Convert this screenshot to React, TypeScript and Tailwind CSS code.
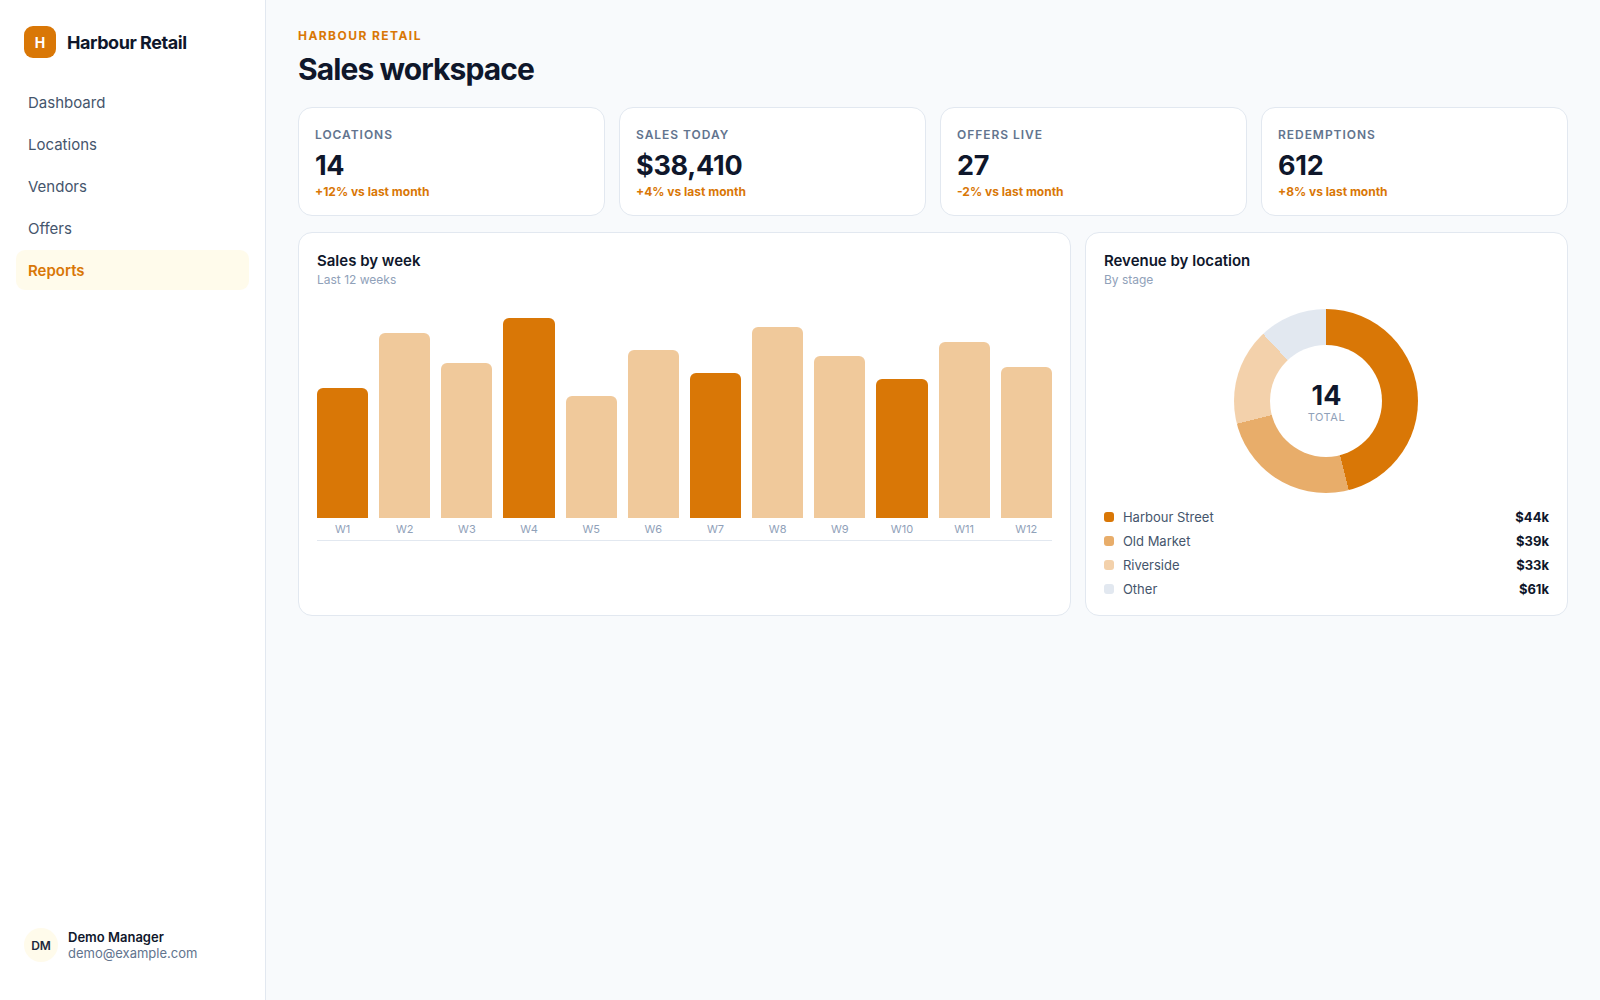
const navItems = ['Dashboard', 'Locations', 'Vendors', 'Offers', 'Reports'];

const stats = [
  { label: 'Locations', value: '14', delta: '+12% vs last month' },
  { label: 'Sales today', value: '$38,410', delta: '+4% vs last month' },
  { label: 'Offers live', value: '27', delta: '-2% vs last month' },
  { label: 'Redemptions', value: '612', delta: '+8% vs last month' },
];

// bar heights in pixels, every third week is highlighted
const weeks = [130, 185, 155, 200, 122, 168, 145, 191, 162, 139, 176, 151];

const locations = [
  { name: 'Harbour Street', value: '$44k', share: 46, color: '#d97706' },
  { name: 'Old Market', value: '$39k', share: 25, color: '#e8ad6a' },
  { name: 'Riverside', value: '$33k', share: 17, color: '#f3d1ab' },
  { name: 'Other', value: '$61k', share: 12, color: '#e2e8f0' },
];

function Sidebar({ active }: { active: string }) {
  return (
    <aside className="w-[266px] shrink-0 flex flex-col bg-white border-r border-slate-200 px-4 pt-[26px] pb-[38px]">
      <div className="flex items-center gap-[11px] px-2 mb-6">
        <div className="w-8 h-8 pt-0.5 rounded-[9px] bg-[#d97706] text-white text-sm font-bold flex items-center justify-center">
          H
        </div>
        <span className="pt-0.5 text-lg font-bold tracking-tight text-slate-900">Harbour Retail</span>
      </div>

      <nav className="flex flex-col gap-0.5">
        {navItems.map((item) => (
          <a
            key={item}
            href="#"
            className={
              item === active
                ? 'h-10 px-3 pt-0.5 flex items-center rounded-[9px] text-[15px] font-semibold bg-amber-50 text-[#d97706]'
                : 'h-10 px-3 pt-0.5 flex items-center rounded-[9px] text-[15px] text-slate-600'
            }
          >
            {item}
          </a>
        ))}
      </nav>

      <div className="mt-auto flex items-center gap-[10px] px-2">
        <div className="w-[34px] h-[34px] pt-0.5 rounded-full bg-amber-50 text-xs font-semibold text-slate-800 flex items-center justify-center">
          DM
        </div>
        <div className="text-[13px] leading-4">
          <div className="font-semibold text-slate-900">Demo Manager</div>
          <div className="text-slate-500">demo@example.com</div>
        </div>
      </div>
    </aside>
  );
}

function StatCard({ label, value, delta }: { label: string; value: string; delta: string }) {
  return (
    <div className="bg-white border border-slate-200 rounded-[14px] px-4 pt-[19px] pb-[15px]">
      <div className="text-xs leading-4 font-semibold uppercase tracking-[0.08em] text-slate-500">{label}</div>
      <div className="mt-[5px] text-[27px] leading-9 font-bold tracking-[-0.01em] text-slate-900">{value}</div>
      <div className="text-xs leading-4 font-bold text-[#d97706]">{delta}</div>
    </div>
  );
}

function PanelHeader({ title, subtitle }: { title: string; subtitle: string }) {
  return (
    <div>
      <h2 className="text-[15px] leading-5 font-semibold text-slate-900">{title}</h2>
      <p className="mt-px text-xs leading-4 text-slate-400">{subtitle}</p>
    </div>
  );
}

function BarChart() {
  return (
    <div className="mt-[30px] flex items-end gap-[11px] border-b border-slate-200">
      {weeks.map((height, i) => (
        <div key={i} className="flex-1 flex flex-col">
          <div
            className={i % 3 === 0 ? 'rounded-t-md bg-[#d97706]' : 'rounded-t-md bg-[#f0c99b]'}
            style={{ height }}
          />
          <span className="py-1 text-center text-[11px] leading-[14px] text-slate-400">W{i + 1}</span>
        </div>
      ))}
    </div>
  );
}

function Donut() {
  let from = 0;
  const stops = locations.map((l) => {
    const stop = `${l.color} ${from}% ${from + l.share}%`;
    from += l.share;
    return stop;
  });

  return (
    <div
      className="mx-auto mt-[21px] w-[184px] h-[184px] rounded-full flex items-center justify-center"
      style={{ background: `conic-gradient(${stops.join(', ')})` }}
    >
      <div className="w-28 h-28 pt-1 rounded-full bg-white flex flex-col items-center justify-center">
        <span className="text-[27px] leading-7 font-bold text-slate-900">14</span>
        <span className="text-[11px] leading-[14px] uppercase tracking-wider text-slate-400">Total</span>
      </div>
    </div>
  );
}

export default function App() {
  return (
    <div className="min-h-screen flex bg-slate-50 font-['Inter',sans-serif] text-slate-900">
      <Sidebar active="Reports" />

      <main className="flex-1 min-w-0 px-8 pt-7 pb-8">
        <p className="text-xs leading-4 font-bold uppercase tracking-[0.12em] text-[#d97706]">Harbour Retail</p>
        <h1 className="mt-[5px] mb-[18px] text-[30px] leading-10 font-bold tracking-[-0.03em]">Sales workspace</h1>

        <div className="grid grid-cols-4 gap-[14px]">
          {stats.map((stat) => (
            <StatCard key={stat.label} {...stat} />
          ))}
        </div>

        <div className="mt-4 grid grid-cols-[1.6fr_1fr] gap-[14px]">
          <section className="bg-white border border-slate-200 rounded-[14px] p-[18px]">
            <PanelHeader title="Sales by week" subtitle="Last 12 weeks" />
            <BarChart />
          </section>

          <section className="bg-white border border-slate-200 rounded-[14px] p-[18px]">
            <PanelHeader title="Revenue by location" subtitle="By stage" />
            <Donut />
            <ul className="mt-4 flex flex-col gap-2 text-[13px] leading-4">
              {locations.map((l) => (
                <li key={l.name} className="flex items-center gap-[9px]">
                  <span className="w-[10px] h-[10px] rounded-[3px]" style={{ background: l.color }} />
                  <span className="text-slate-600">{l.name}</span>
                  <span className="ml-auto font-bold">{l.value}</span>
                </li>
              ))}
            </ul>
          </section>
        </div>
      </main>
    </div>
  );
}
